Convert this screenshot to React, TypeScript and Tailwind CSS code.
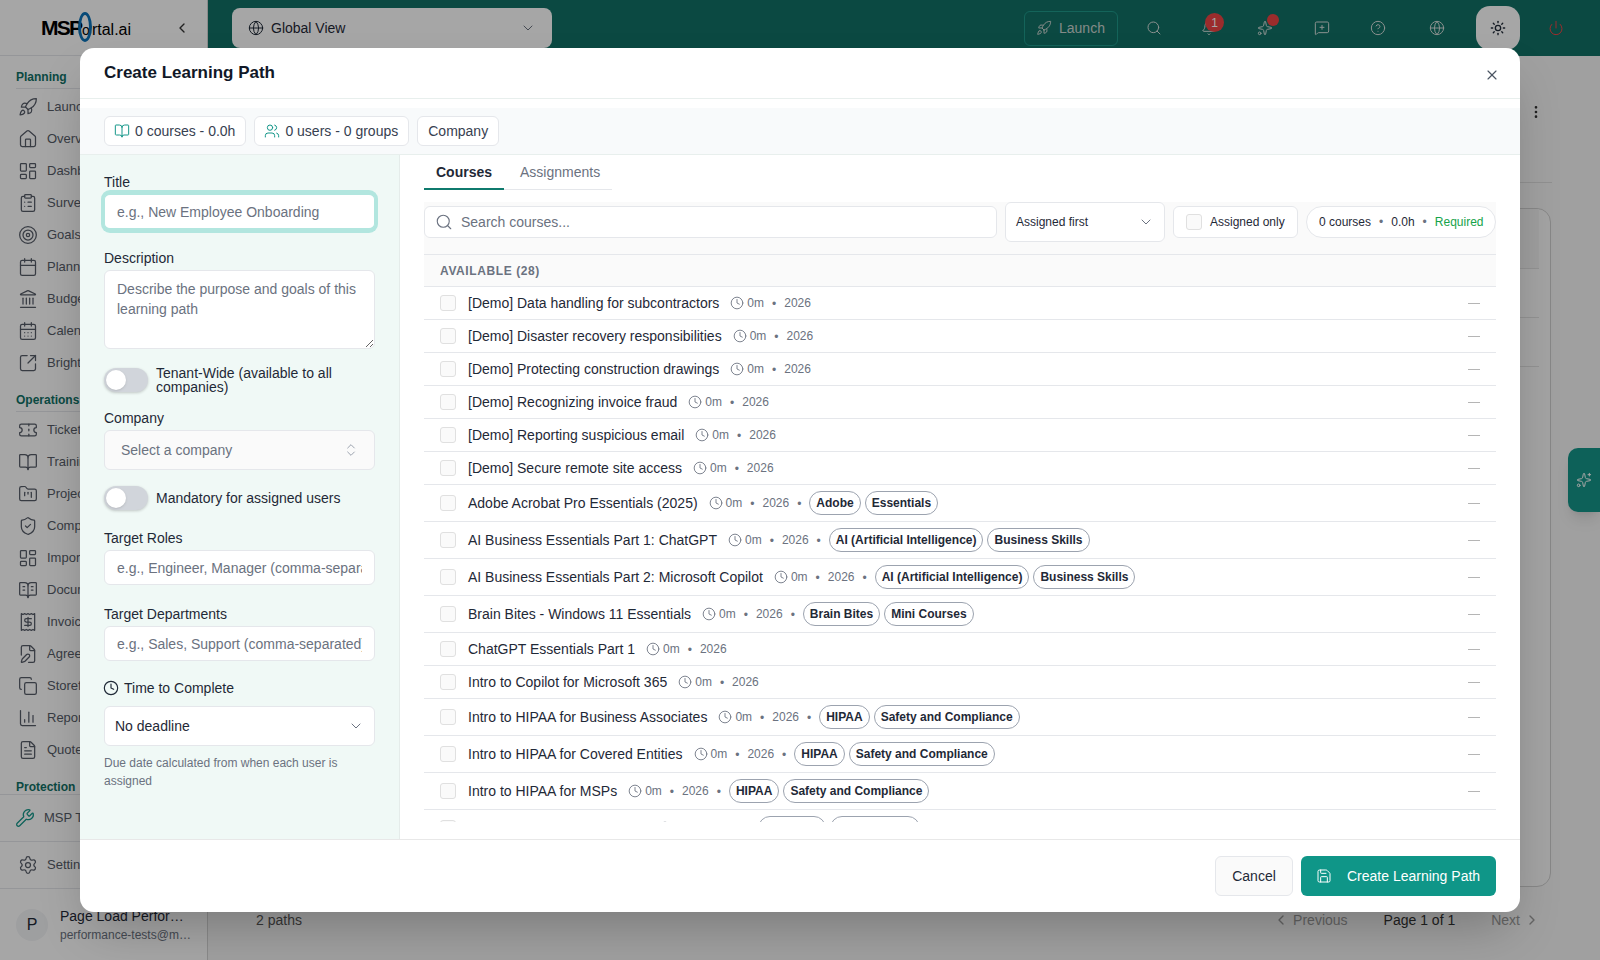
import {
  Bell,
  BookOpen,
  BookOpenText,
  Calendar,
  CalendarDays,
  ChartColumn,
  ChevronDown,
  ChevronLeft,
  ChevronRight,
  ChevronsUpDown,
  CircleHelp,
  ClipboardList,
  Clock,
  Copy,
  EllipsisVertical,
  FilePen,
  FileText,
  FolderKanban,
  Globe,
  House,
  Landmark,
  LayoutDashboard,
  MessageSquarePlus,
  Power,
  Receipt,
  Rocket,
  Save,
  Search,
  Settings,
  ShieldCheck,
  Sparkles,
  SquareArrowOutUpRight,
  Sun,
  Target,
  Ticket,
  Users,
  Wrench,
  X,
} from "lucide-react";
import type { LucideIcon } from "lucide-react";

type NavItem = { label: string; icon: LucideIcon };

const planning: NavItem[] = [
  { label: "Launch", icon: Rocket },
  { label: "Overview", icon: House },
  { label: "Dashboards", icon: LayoutDashboard },
  { label: "Surveys", icon: ClipboardList },
  { label: "Goals", icon: Target },
  { label: "Planner", icon: Calendar },
  { label: "Budgets", icon: Landmark },
  { label: "Calendar", icon: CalendarDays },
  { label: "BrightGauge", icon: SquareArrowOutUpRight },
];

const operations: NavItem[] = [
  { label: "Tickets", icon: Ticket },
  { label: "Training", icon: BookOpen },
  { label: "Projects", icon: FolderKanban },
  { label: "Compliance", icon: ShieldCheck },
  { label: "Imports", icon: LayoutDashboard },
  { label: "Documents", icon: BookOpenText },
  { label: "Invoices", icon: Receipt },
  { label: "Agreements", icon: FilePen },
  { label: "Storefront", icon: Copy },
  { label: "Reports", icon: ChartColumn },
  { label: "Quotes", icon: FileText },
];

const courses: { title: string; tags?: string[] }[] = [
  { title: "[Demo] Data handling for subcontractors" },
  { title: "[Demo] Disaster recovery responsibilities" },
  { title: "[Demo] Protecting construction drawings" },
  { title: "[Demo] Recognizing invoice fraud" },
  { title: "[Demo] Reporting suspicious email" },
  { title: "[Demo] Secure remote site access" },
  { title: "Adobe Acrobat Pro Essentials (2025)", tags: ["Adobe", "Essentials"] },
  { title: "AI Business Essentials Part 1: ChatGPT", tags: ["AI (Artificial Intelligence)", "Business Skills"] },
  { title: "AI Business Essentials Part 2: Microsoft Copilot", tags: ["AI (Artificial Intelligence)", "Business Skills"] },
  { title: "Brain Bites - Windows 11 Essentials", tags: ["Brain Bites", "Mini Courses"] },
  { title: "ChatGPT Essentials Part 1" },
  { title: "Intro to Copilot for Microsoft 365" },
  { title: "Intro to HIPAA for Business Associates", tags: ["HIPAA", "Safety and Compliance"] },
  { title: "Intro to HIPAA for Covered Entities", tags: ["HIPAA", "Safety and Compliance"] },
  { title: "Intro to HIPAA for MSPs", tags: ["HIPAA", "Safety and Compliance"] },
  { title: "Intro to Microsoft Teams Tips", tags: ["Microsoft", "Mini Courses"] },
];

function NavSection({ title, items }: { title: string; items: NavItem[] }) {
  return (
    <div>
      <div className="mx-4 flex h-[33px] items-end border-b border-[#e5e7eb] pb-[3px] text-xs font-bold leading-4 text-[#117166]">
        {title}
      </div>
      <div className="mt-[2px]">
        {items.map((item) => (
          <div key={item.label} className="flex h-8 items-center gap-[9px] pl-[18px] text-[13px] text-[#565c68]">
            <item.icon className="h-5 w-5 shrink-0" strokeWidth={1.5} />
            <span>{item.label}</span>
          </div>
        ))}
      </div>
    </div>
  );
}

function Sidebar() {
  return (
    <aside className="flex h-full w-[208px] shrink-0 flex-col border-r border-[#d4d4d4] bg-white">
      <div className="flex h-14 shrink-0 items-center border-b border-[#e5e7eb] pl-[41px] pr-[17px]">
        <div className="relative flex items-baseline text-[16px] leading-none text-black">
          <span className="text-[21px] font-bold tracking-[-1.8px]">MSP</span>
          <span className="ml-[1px] text-[14px]">o</span>
          <span className="ml-[2px]">rtal.ai</span>
          <span className="absolute left-[37px] top-[-5px] h-[30px] w-[14px] rounded-[50%] border-[3px] border-[#0b72b9]" />
        </div>
        <ChevronLeft className="ml-auto h-4 w-4 text-[#333]" />
      </div>
      <div className="h-[738px] shrink-0 overflow-hidden">
        <NavSection title="Planning" items={planning} />
        <NavSection title="Operations" items={operations} />
        <div className="mt-[9px] px-4 text-xs font-bold leading-6 text-[#117166]">Protection</div>
      </div>
      <div className="flex h-[47px] shrink-0 items-center gap-[9px] border-t border-[#e5e7eb] pl-[15px] text-[13px] text-[#565c68]">
        <Wrench className="h-5 w-5 text-[#149689]" strokeWidth={1.5} />
        <span>MSP Tools</span>
      </div>
      <div className="flex h-[47px] shrink-0 items-center gap-[9px] border-t border-[#e5e7eb] pl-[18px] text-[13px] text-[#565c68]">
        <Settings className="h-5 w-5" strokeWidth={1.5} />
        <span>Settings</span>
      </div>
      <div className="flex flex-1 items-center gap-3 border-t border-[#e5e7eb] pl-4 pr-4">
        <div className="flex h-8 w-8 shrink-0 items-center justify-center rounded-full bg-[#f3f4f6] text-base text-[#1f2937]">
          P
        </div>
        <div className="min-w-0 flex-1">
          <div className="truncate text-sm leading-5 text-[#1f2937]">Page Load Performance</div>
          <div className="truncate text-xs leading-[18px] text-[#6b7280]">performance-tests@msportal.ai</div>
        </div>
      </div>
    </aside>
  );
}

function TopBar() {
  const icon = "h-4 w-4 shrink-0 text-[#d6dfdc]";
  return (
    <header className="flex h-14 shrink-0 items-center bg-[#117166] pl-6 text-white">
      <div className="flex h-10 w-[320px] items-center rounded-lg bg-white px-4 text-sm text-[#1f2937]">
        <Globe className="mr-[7px] h-4 w-4" strokeWidth={1.5} />
        <span>Global View</span>
        <ChevronDown className="ml-auto h-4 w-4 text-[#6b7280]" strokeWidth={1.5} />
      </div>
      <div className="ml-[472px] flex h-[35px] w-[94px] items-center gap-[7px] rounded-md border border-[#1f9a8b] pl-[11px] text-sm text-[#cbd5d1]">
        <Rocket className="h-4 w-4" strokeWidth={1.5} />
        <span>Launch</span>
      </div>
      <Search className={`ml-[28px] ${icon}`} strokeWidth={1.5} />
      <div className="relative ml-[39px] h-4 w-4">
        <Bell className={icon} strokeWidth={1.5} />
        <span className="absolute left-[4px] top-[-7px] flex h-[19px] w-[19px] items-center justify-center rounded-full bg-[#ef4444] text-xs text-white">
          1
        </span>
      </div>
      <div className="relative ml-[40px] h-4 w-4">
        <Sparkles className={icon} strokeWidth={1.5} />
        <span className="absolute left-[10px] top-[-6px] h-3 w-3 rounded-full bg-[#ef4444]" />
      </div>
      <MessageSquarePlus className={`ml-[41px] ${icon}`} strokeWidth={1.5} />
      <CircleHelp className={`ml-[40px] ${icon}`} strokeWidth={1.5} />
      <Globe className={`ml-[43px] ${icon}`} strokeWidth={1.5} />
      <div className="ml-[31px] flex h-[44px] w-[44px] items-center justify-center rounded-[14px] bg-white">
        <Sun className="h-4 w-4 text-[#1f2937]" strokeWidth={2} />
      </div>
      <Power className="ml-[28px] h-4 w-4 text-[#ef4444]" strokeWidth={1.5} />
    </header>
  );
}

function MainBehind() {
  return (
    <main className="flex min-h-0 flex-1 flex-col bg-[#f6f6f6]">
      <div className="mr-[48px] flex h-[127px] shrink-0 items-center justify-end border-b border-[#dddddd] pb-[15px] pr-2">
        <EllipsisVertical className="h-4 w-4 text-[#333]" />
      </div>
      <div className="ml-[48px] mr-[49px] mt-[25px] h-[679px] shrink-0 rounded-[14px] border border-[#d0d0d0] bg-[#fafafa] pr-[11px]">
        <div className="h-[60px] border-b border-[#e0e0e0] bg-[#f3f3f3]" />
        <div className="h-[49px] border-b border-[#e0e0e0]" />
        <div className="h-[49px] border-b border-[#e0e0e0]" />
      </div>
      <div className="flex h-[66px] shrink-0 items-center pl-[48px] pr-[60px] text-sm text-[#555]">
        <span>2 paths</span>
        <span className="ml-auto flex items-center gap-1 text-[#9a9a9a]">
          <ChevronLeft className="h-4 w-4" />
          Previous
        </span>
        <span className="ml-9 text-[#333]">Page 1 of 1</span>
        <span className="ml-9 flex items-center gap-1 text-[#9a9a9a]">
          Next
          <ChevronRight className="h-4 w-4" />
        </span>
      </div>
    </main>
  );
}

function Toggle() {
  return (
    <div className="relative h-6 w-11 shrink-0 rounded-full bg-[#d1d5db] shadow-[0_1px_3px_rgba(0,0,0,0.2)]">
      <span className="absolute left-[2px] top-[2px] h-5 w-5 rounded-full bg-white shadow-sm" />
    </div>
  );
}

function LeftPanel() {
  const label = "block h-5 text-sm leading-5 text-[#1f2937]";
  const input =
    "mt-[2px] block h-[35px] w-full rounded-md border border-[#e5e7eb] bg-white px-3 text-sm text-[#1f2937] placeholder:text-[#6b7280] outline-none";
  return (
    <div className="w-[320px] shrink-0 border-r border-[#e5ecea] bg-[#f0f9f6] pl-6 pr-6 pt-[17px]">
      <label className={label}>Title</label>
      <input
        className="mt-[1px] block h-[37px] w-full rounded-md border-x border-y-2 border-[#b2e6df] bg-white px-3 text-sm text-[#1f2937] outline-none ring-[3px] ring-[#b2e6df] placeholder:text-[#6b7280]"
        placeholder="e.g., New Employee Onboarding"
        readOnly
      />
      <label className={`${label} mt-[18px]`}>Description</label>
      <textarea
        className="mt-[2px] block h-[79px] w-full rounded-md border border-[#e5e7eb] bg-white px-3 py-2 text-sm leading-5 placeholder:text-[#6b7280] outline-none"
        placeholder="Describe the purpose and goals of this learning path"
        readOnly
      />
      <div className="mt-[17px] flex items-center gap-2">
        <Toggle />
        <span className="text-sm leading-[14px] text-[#1f2937]">Tenant-Wide (available to all companies)</span>
      </div>
      <label className={`${label} mt-[14px]`}>Company</label>
      <div className="mt-[2px] flex h-10 items-center justify-between rounded-md border border-[#e5e7eb] bg-[#fafafa] pl-4 pr-[15px] text-sm text-[#6b7280]">
        <span>Select a company</span>
        <ChevronsUpDown className="h-4 w-4 text-[#9ca3af]" strokeWidth={1.5} />
      </div>
      <div className="mt-4 flex items-center gap-2">
        <Toggle />
        <span className="text-sm text-[#1f2937]">Mandatory for assigned users</span>
      </div>
      <label className={`${label} mt-[18px]`}>Target Roles</label>
      <input className={input} placeholder="e.g., Engineer, Manager (comma-separated)" readOnly />
      <label className={`${label} mt-[19px]`}>Target Departments</label>
      <input className={input} placeholder="e.g., Sales, Support (comma-separated)" readOnly />
      <div className="ml-[-1px] mt-[17px] flex h-5 items-center gap-[5px] text-sm text-[#1f2937]">
        <Clock className="h-4 w-4" strokeWidth={1.75} />
        <span>Time to Complete</span>
      </div>
      <div className="mt-2 flex h-10 items-center justify-between rounded-md border border-[#e5e7eb] bg-white pl-[10px] pr-[10px] text-sm text-[#1f2937]">
        <span>No deadline</span>
        <ChevronDown className="h-4 w-4 text-[#6b7280]" strokeWidth={1.5} />
      </div>
      <p className="mt-2 text-xs leading-[18px] text-[#6b7280]">Due date calculated from when each user is assigned</p>
    </div>
  );
}

function Dot() {
  return <span className="text-xs text-[#6b7280]">•</span>;
}

function CourseRow({ title, tags }: { title: string; tags?: string[] }) {
  return (
    <div className={`flex shrink-0 items-center border-b border-[#e5e7eb] pl-4 pr-4 ${tags ? "h-[37px]" : "h-[33px]"}`}>
      <span className="h-4 w-4 shrink-0 rounded-[3px] border border-[#e0e0e0] bg-[#fafafa]" />
      <span className="ml-3 text-sm text-[#1f2937]">{title}</span>
      <Clock className="ml-[11px] h-[14px] w-[14px] text-[#6b7280]" strokeWidth={1.5} />
      <span className="ml-[3px] text-xs text-[#6b7280]">0m</span>
      <span className="mx-2">
        <Dot />
      </span>
      <span className="text-xs text-[#6b7280]">2026</span>
      {tags && (
        <>
          <span className="mx-2">
            <Dot />
          </span>
          <span className="flex gap-1">
            {tags.map((tag) => (
              <span
                key={tag}
                className="flex h-6 items-center rounded-full border border-[#9ca3af] px-[6px] text-xs font-semibold text-[#1f2937]"
              >
                {tag}
              </span>
            ))}
          </span>
        </>
      )}
      <span className="ml-auto h-px w-3 bg-[#b5b5b5]" />
    </div>
  );
}

function RightPanel() {
  return (
    <div className="flex min-w-0 flex-1 flex-col px-6">
      <div className="flex h-[35px] w-[188px] shrink-0 border-b border-[#e5e7eb] text-sm">
        <div className="mb-[-1px] flex w-20 items-center justify-center border-b-2 border-[#0f7a6d] pt-[1px] font-semibold text-[#1f2937]">
          Courses
        </div>
        <div className="flex items-center pl-4 text-[#6b7280]">Assignments</div>
      </div>
      <div className="mt-3 flex h-[52px] shrink-0 gap-2 bg-[#fafafa] pb-3">
        <div className="flex h-8 flex-1 items-center gap-2 self-center rounded-md border border-[#e5e7eb] bg-white pl-[10px] text-sm text-[#6b7280]">
          <Search className="h-[18px] w-[18px] text-[#6b7280]" strokeWidth={1.5} />
          <span>Search courses...</span>
        </div>
        <div className="flex h-10 w-40 items-center justify-between rounded-md border border-[#e5e7eb] bg-white pl-[10px] pr-[10px] text-xs text-[#1f2937]">
          <span>Assigned first</span>
          <ChevronDown className="h-4 w-4 text-[#6b7280]" strokeWidth={1.5} />
        </div>
        <div className="flex h-8 w-[125px] items-center gap-2 self-center rounded-md border border-[#e5e7eb] bg-white pl-3 text-xs text-[#1f2937]">
          <span className="h-4 w-4 rounded-[3px] border border-[#e0e0e0] bg-[#fafafa]" />
          <span>Assigned only</span>
        </div>
        <div className="flex h-8 w-[190px] items-center gap-2 self-center rounded-full border border-[#e5e7eb] bg-white pl-3 text-xs text-[#1f2937]">
          <span>0 courses</span>
          <Dot />
          <span>0.0h</span>
          <Dot />
          <span className="text-[#16a34a]">Required</span>
        </div>
      </div>
      <div className="flex h-[33px] shrink-0 items-center border-y border-[#e5e7eb] bg-[#fafafa] pl-4 text-xs font-semibold tracking-[0.6px] text-[#6b7280]">
        AVAILABLE (28)
      </div>
      <div className="flex h-[535px] shrink-0 flex-col overflow-hidden">
        {courses.map((c) => (
          <CourseRow key={c.title} title={c.title} tags={c.tags} />
        ))}
      </div>
    </div>
  );
}

function LearningPathModal() {
  const chip = "flex h-[30px] items-center gap-[5px] rounded-md border border-[#e5e7eb] bg-white px-[10px]";
  return (
    <div className="absolute left-[80px] top-[48px] flex h-[864px] w-[1440px] flex-col overflow-hidden rounded-[14px] bg-white shadow-2xl">
      <div className="flex h-[51px] shrink-0 items-center justify-between border-b border-[#e8efed] pl-6 pr-5">
        <h2 className="text-[17px] font-semibold text-[#111827]">Create Learning Path</h2>
        <X className="mt-[4px] h-4 w-4 text-[#4b5563]" strokeWidth={1.75} />
      </div>
      <div className="mt-[9px] flex h-[47px] shrink-0 items-center gap-2 border-b border-[#e8efed] bg-[#f8fafb] pl-6 text-sm text-[#374151]">
        <div className={chip}>
          <BookOpen className="ml-[-1px] h-4 w-4 text-[#149689]" strokeWidth={1.5} />
          0 courses - 0.0h
        </div>
        <div className={chip}>
          <Users className="ml-[-1px] h-4 w-4 text-[#149689]" strokeWidth={1.5} />
          0 users - 0 groups
        </div>
        <div className={chip}>Company</div>
      </div>
      <div className="flex min-h-0 flex-1">
        <LeftPanel />
        <RightPanel />
      </div>
      <div className="flex h-[73px] shrink-0 items-center justify-end gap-2 border-t border-[#e8e8e8] pr-6">
        <button className="h-10 w-[78px] rounded-md border border-[#e5e7eb] bg-[#fafafa] text-sm text-[#1f2937]">
          Cancel
        </button>
        <button className="flex h-10 w-[195px] items-center gap-[15px] rounded-md bg-[#0f9688] pl-[15px] text-sm text-white">
          <Save className="h-4 w-4" strokeWidth={1.5} />
          Create Learning Path
        </button>
      </div>
    </div>
  );
}

export default function App() {
  return (
    <div className="relative flex h-[960px] w-[1600px] overflow-hidden bg-white font-['Liberation_Sans',Arial,sans-serif]">
      <Sidebar />
      <div className="flex min-w-0 flex-1 flex-col">
        <TopBar />
        <MainBehind />
      </div>
      <div className="absolute right-0 top-[448px] flex h-16 w-8 items-center justify-center rounded-l-[10px] bg-[#149689] text-white shadow-lg">
        <Sparkles className="h-4 w-4" strokeWidth={1.5} />
      </div>
      {/* dim layer + dialog */}
      <div className="absolute inset-0 bg-black/35" />
      <LearningPathModal />
    </div>
  );
}
